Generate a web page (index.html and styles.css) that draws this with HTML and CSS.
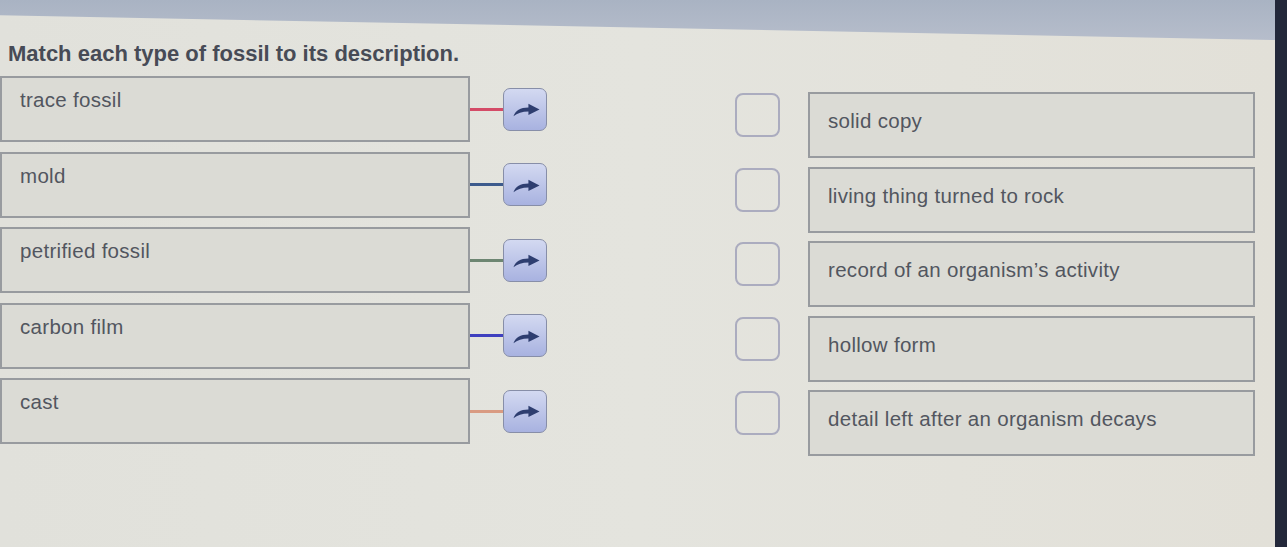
FILE: index.html
```html
<!DOCTYPE html>
<html lang="en">
<head>
    <meta charset="UTF-8">
    <meta name="viewport" content="width=device-width, initial-scale=1.0">
    <title>Fossil Matching</title>
    <link rel="stylesheet" href="styles.css">
</head>
<body>
    <div class="screen">
        <div class="topbar"></div>

        <h1 class="prompt">Match each type of fossil to its description.</h1>

        <div class="board">
            <!-- Begriffe links, jeweils mit Verbindungslinie und Pfeil-Knopf -->
            <div class="terms">
                <div class="term-row">
                    <div class="term">trace fossil</div>
                    <span class="wire wire-red"></span>
                    <button class="arrow-btn" type="button">
                        <svg viewBox="0 0 28 14"><path d="M0.5 13.5C2.5 8 7.5 4.5 16 4.5V0.5L27.5 6.5L16 12.2V8.5C9.5 8.5 4.5 10 0.5 13.5Z"/></svg>
                    </button>
                </div>
                <div class="term-row">
                    <div class="term">mold</div>
                    <span class="wire wire-blue"></span>
                    <button class="arrow-btn" type="button">
                        <svg viewBox="0 0 28 14"><path d="M0.5 13.5C2.5 8 7.5 4.5 16 4.5V0.5L27.5 6.5L16 12.2V8.5C9.5 8.5 4.5 10 0.5 13.5Z"/></svg>
                    </button>
                </div>
                <div class="term-row">
                    <div class="term">petrified fossil</div>
                    <span class="wire wire-green"></span>
                    <button class="arrow-btn" type="button">
                        <svg viewBox="0 0 28 14"><path d="M0.5 13.5C2.5 8 7.5 4.5 16 4.5V0.5L27.5 6.5L16 12.2V8.5C9.5 8.5 4.5 10 0.5 13.5Z"/></svg>
                    </button>
                </div>
                <div class="term-row">
                    <div class="term">carbon film</div>
                    <span class="wire wire-violet"></span>
                    <button class="arrow-btn" type="button">
                        <svg viewBox="0 0 28 14"><path d="M0.5 13.5C2.5 8 7.5 4.5 16 4.5V0.5L27.5 6.5L16 12.2V8.5C9.5 8.5 4.5 10 0.5 13.5Z"/></svg>
                    </button>
                </div>
                <div class="term-row">
                    <div class="term">cast</div>
                    <span class="wire wire-orange"></span>
                    <button class="arrow-btn" type="button">
                        <svg viewBox="0 0 28 14"><path d="M0.5 13.5C2.5 8 7.5 4.5 16 4.5V0.5L27.5 6.5L16 12.2V8.5C9.5 8.5 4.5 10 0.5 13.5Z"/></svg>
                    </button>
                </div>
            </div>

            <!-- Beschreibungen rechts mit Ablagefeld -->
            <div class="descriptions">
                <div class="desc-row">
                    <span class="drop"></span>
                    <div class="desc">solid copy</div>
                </div>
                <div class="desc-row">
                    <span class="drop"></span>
                    <div class="desc">living thing turned to rock</div>
                </div>
                <div class="desc-row">
                    <span class="drop"></span>
                    <div class="desc">record of an organism’s activity</div>
                </div>
                <div class="desc-row">
                    <span class="drop"></span>
                    <div class="desc">hollow form</div>
                </div>
                <div class="desc-row">
                    <span class="drop"></span>
                    <div class="desc">detail left after an organism decays</div>
                </div>
            </div>
        </div>
    </div>
</body>
</html>
```

FILE: styles.css
```css
html, body {
    margin: 0;
    height: 100%;
}

body {
    font-family: "Liberation Sans", Arial, sans-serif;
    background-color: #23283a;
    color: #52565f;
    overflow: hidden;
}

.screen {
    width: 1275px;
    height: 547px;
    background: linear-gradient(90deg, #e1e1db 0%, #e4e4de 50%, #e2e0d8 100%);
}

.topbar {
    height: 40px;
    background: linear-gradient(180deg, #a9b3c3 0%, #b6bdcb 100%);
    clip-path: polygon(0 0, 100% 0, 100% 100%, 0 38%);
}

.prompt {
    margin: 0 0 10px 8px;
    padding-top: 2px;
    font-size: 22px;
    line-height: 24px;
    font-weight: bold;
    color: #474b56;
}

.board {
    display: flex;
    gap: 188px;
}

.terms {
    display: flex;
    flex-direction: column;
    gap: 9.5px;
}

.term-row {
    display: flex;
    align-items: center;
}

.term {
    box-sizing: border-box;
    width: 470px;
    height: 66px;
    padding: 10px 18px;
    border: 2px solid #989b9f;
    background-color: #dbdbd5;
    font-size: 20.5px;
    letter-spacing: 0.3px;
}

.wire {
    width: 33px;
    height: 3px;
}

.wire-red { background-color: #d44b67; }
.wire-blue { background-color: #3d5b8d; }
.wire-green { background-color: #6d8672; }
.wire-violet { background-color: #3f40bf; }
.wire-orange { background-color: #d99b82; }

.arrow-btn {
    box-sizing: border-box;
    width: 44px;
    height: 43px;
    padding: 2px 0 0 2px;
    border: 1.5px solid #878ea8;
    border-radius: 7px;
    background: linear-gradient(180deg, #d3d9f1 0%, #a8b2e0 100%);
    display: flex;
    align-items: center;
    justify-content: center;
}

.arrow-btn svg {
    width: 27px;
    height: 14px;
    fill: #2e3e70;
}

.descriptions {
    display: flex;
    flex-direction: column;
    gap: 8.5px;
    margin-top: 16px;
}

.desc-row {
    display: flex;
    align-items: flex-start;
    gap: 28px;
}

.drop {
    box-sizing: border-box;
    width: 45px;
    height: 44px;
    margin-top: 1px;
    border: 2px solid #abacbf;
    border-radius: 8px;
}

.desc {
    box-sizing: border-box;
    width: 447px;
    height: 66px;
    padding: 0 18px 8px;
    display: flex;
    align-items: center;
    border: 2px solid #989b9f;
    background-color: #dbdbd5;
    font-size: 20.5px;
    letter-spacing: 0.3px;
}
```
